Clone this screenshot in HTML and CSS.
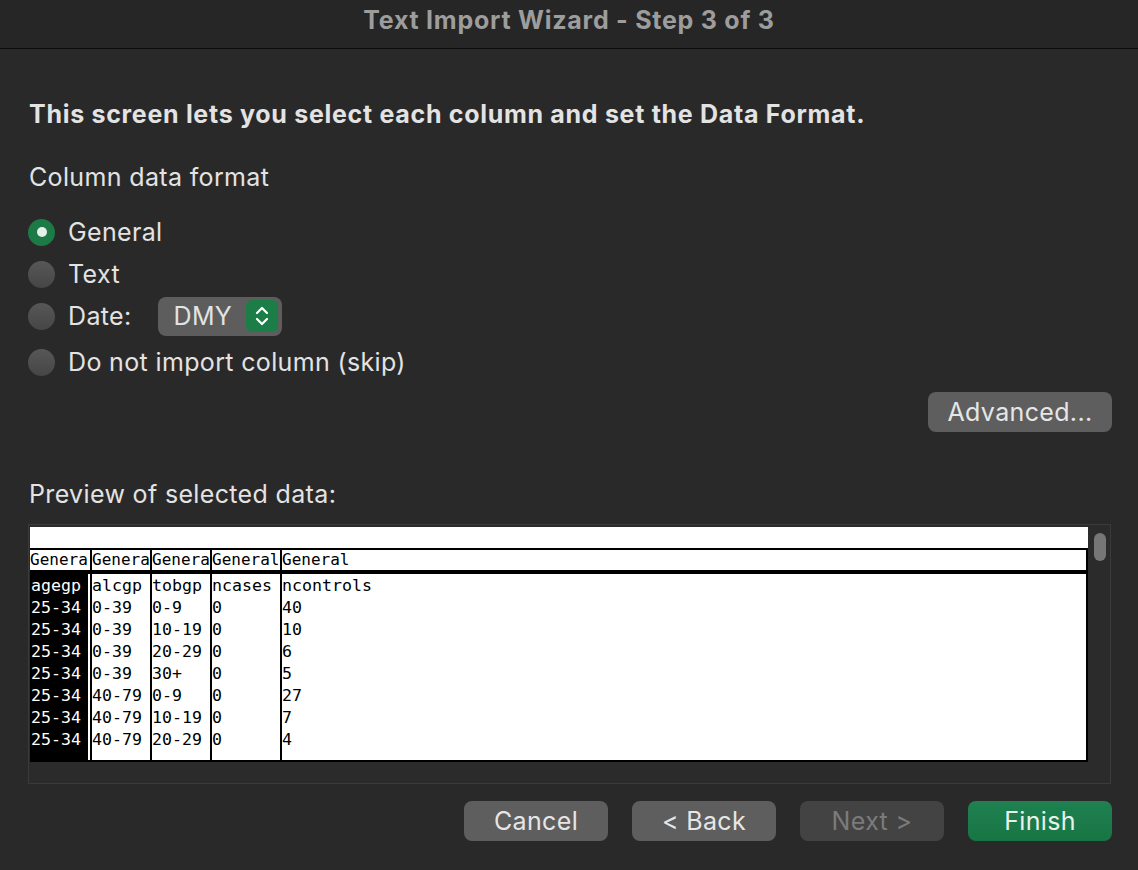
FILE: index.html
```html
<!DOCTYPE html>
<html>
<head>
<meta charset="utf-8">
<link rel="stylesheet" href="styles.css">
</head>
<body>
<div class="titlebar">Text Import Wizard - Step 3 of 3</div>
<div class="content">
  <div class="heading">This screen lets you select each column and set the Data Format.</div>
  <div class="label">Column data format</div>
  <div class="radios">
    <div class="radio-row"><span class="radio on"></span><span>General</span></div>
    <div class="radio-row"><span class="radio"></span><span>Text</span></div>
    <div class="radio-row"><span class="radio"></span><span>Date:</span>
      <div class="popup"><span class="popup-text">DMY</span><span class="stepper"><svg width="16" height="22" viewBox="0 0 16 22"><path d="M3 8 L8 3 L13 8" fill="none" stroke="#fff" stroke-width="2.2" stroke-linecap="round" stroke-linejoin="round"/><path d="M3 14 L8 19 L13 14" fill="none" stroke="#fff" stroke-width="2.2" stroke-linecap="round" stroke-linejoin="round"/></svg></span></div>
    </div>
    <div class="radio-row last"><span class="radio"></span><span>Do not import column (skip)</span></div>
  </div>
  <div class="adv-row"><button class="btn adv">Advanced...</button></div>
  <div class="label preview-label">Preview of selected data:</div>
  <div class="frame">
    <div class="sheet">
      <div class="blank"></div>
      <div class="hdr">
        <div class="c c1">Genera</div>
        <div class="c c2">Genera</div>
        <div class="c c3">Genera</div>
        <div class="c c4">General</div>
        <div class="c c5">General</div>
      </div>
      <div class="data">
        <div class="col c1 sel"><div>agegp</div><div>25-34</div><div>25-34</div><div>25-34</div><div>25-34</div><div>25-34</div><div>25-34</div><div>25-34</div></div>
        <div class="col c2"><div>alcgp</div><div>0-39</div><div>0-39</div><div>0-39</div><div>0-39</div><div>40-79</div><div>40-79</div><div>40-79</div></div>
        <div class="col c3"><div>tobgp</div><div>0-9</div><div>10-19</div><div>20-29</div><div>30+</div><div>0-9</div><div>10-19</div><div>20-29</div></div>
        <div class="col c4"><div>ncases</div><div>0</div><div>0</div><div>0</div><div>0</div><div>0</div><div>0</div><div>0</div></div>
        <div class="col c5"><div>ncontrols</div><div>40</div><div>10</div><div>6</div><div>5</div><div>27</div><div>7</div><div>4</div></div>
      </div>
    </div>
    <div class="scroll"><div class="thumb"></div></div>
  </div>
  <div class="buttons">
    <button class="btn">Cancel</button>
    <button class="btn">&lt; Back</button>
    <button class="btn disabled">Next &gt;</button>
    <button class="btn primary">Finish</button>
  </div>
</div>
</body>
</html>
```
FILE: styles.css
```css
html, body {
  margin: 0;
  padding: 0;
  background: #292929;
  font-family: Inter, "Noto Sans", sans-serif;
  color: #e3e3e3;
}
.titlebar {
  height: 48px;
  line-height: 40px;
  background: #262626;
  border-bottom: 1px solid #0c0c0c;
  text-align: center;
  color: #9d9d9d;
  font-weight: 700;
  font-size: 25px;
  letter-spacing: 0.75px;
}
.content {
  padding: 0 26px 0 28px;
}
.heading {
  margin-top: 50px;
  font-size: 25px;
  line-height: 30px;
  font-weight: 700;
  letter-spacing: 0.7px;
  padding-left: 1px;
}
.label {
  margin-top: 33px;
  font-size: 25px;
  line-height: 30px;
  letter-spacing: 0.35px;
  padding-left: 1px;
}
.radios {
  margin-top: 19px;
}
.radio-row {
  height: 42px;
  display: flex;
  align-items: center;
  font-size: 25px;
  letter-spacing: 0.35px;
}
.radio-row.last {
  margin-top: 4px;
}
.radio {
  width: 27px;
  height: 27px;
  border-radius: 50%;
  background: linear-gradient(#575757, #464646);
  margin-right: 13px;
  display: flex;
  align-items: center;
  justify-content: center;
  box-sizing: border-box;
}
.radio.on {
  background: #1c7a46;
}
.radio.on::after {
  content: "";
  width: 10px;
  height: 10px;
  border-radius: 50%;
  background: #e6f0e9;
}
.popup {
  margin-left: 26px;
  width: 124px;
  height: 39px;
  background: #5d5d5d;
  border-radius: 8px;
  display: flex;
  align-items: center;
  box-sizing: border-box;
  padding: 0 4px 0 16px;
  justify-content: space-between;
}
.popup-text {
  font-size: 25px;
}
.stepper {
  width: 32px;
  height: 32px;
  border-radius: 6px;
  background: #1c7d47;
  display: flex;
  align-items: center;
  justify-content: center;
}
.adv-row {
  margin-top: 9px;
  display: flex;
  justify-content: flex-end;
}
.btn {
  width: 144px;
  height: 40px;
  border: none;
  border-radius: 8px;
  background: #5e5e5e;
  color: #e6e6e6;
  font-family: Inter, "Noto Sans", sans-serif;
  font-size: 25px;
  letter-spacing: 0.35px;
  padding: 0;
}
.btn.adv {
  width: 184px;
}
.preview-label {
  margin-top: 47px;
}
.frame {
  margin-top: 15px;
  width: 1083px;
  height: 260px;
  box-sizing: border-box;
  border: 1px solid #3a3a3a;
  background: #2b2b2b;
  padding: 2px 0 0 1px;
  display: flex;
}
.sheet {
  width: 1058px;
  height: 235px;
  display: flex;
  flex-direction: column;
  font-family: "DejaVu Sans Mono", monospace;
  font-size: 16.6px;
  color: #000;
}
.blank {
  height: 21px;
  background: #fff;
}
.hdr {
  height: 20px;
  line-height: 20px;
  background: #fff;
  border-top: 2px solid #000;
  border-bottom: 4px solid #000;
  border-right: 2px solid #000;
  display: flex;
  overflow: hidden;
  font-size: 16px;
}
.c, .col {
  box-sizing: border-box;
  overflow: hidden;
  white-space: nowrap;
}
.c1 { width: 60px; padding-left: 1px; }
.c2, .c3 { width: 60px; border-left: 2px solid #000; }
.c4 { width: 70px; border-left: 2px solid #000; }
.c5 { flex: 1; border-left: 2px solid #000; }
.hdr .c1 { padding-left: 0; }
.data {
  flex: 1;
  background: #fff;
  border-right: 2px solid #000;
  border-bottom: 2px solid #000;
  display: flex;
  line-height: 22px;
}
.col {
  padding-top: 1px;
}
.col.sel {
  width: 58px;
  margin-right: 2px;
  background: #000;
  color: #fff;
}
.scroll {
  width: 22px;
  height: 235px;
  padding: 6px 0 0 6px;
  box-sizing: border-box;
}
.thumb {
  width: 12px;
  height: 28px;
  border-radius: 6px;
  background: #767676;
}
.buttons {
  margin-top: 17px;
  display: flex;
  justify-content: flex-end;
  gap: 24px;
}
.btn.disabled {
  background: #434343;
  color: #7b7b7b;
}
.btn.primary {
  background: linear-gradient(#1f8150, #187544);
  color: #e8f2ec;
}
```
